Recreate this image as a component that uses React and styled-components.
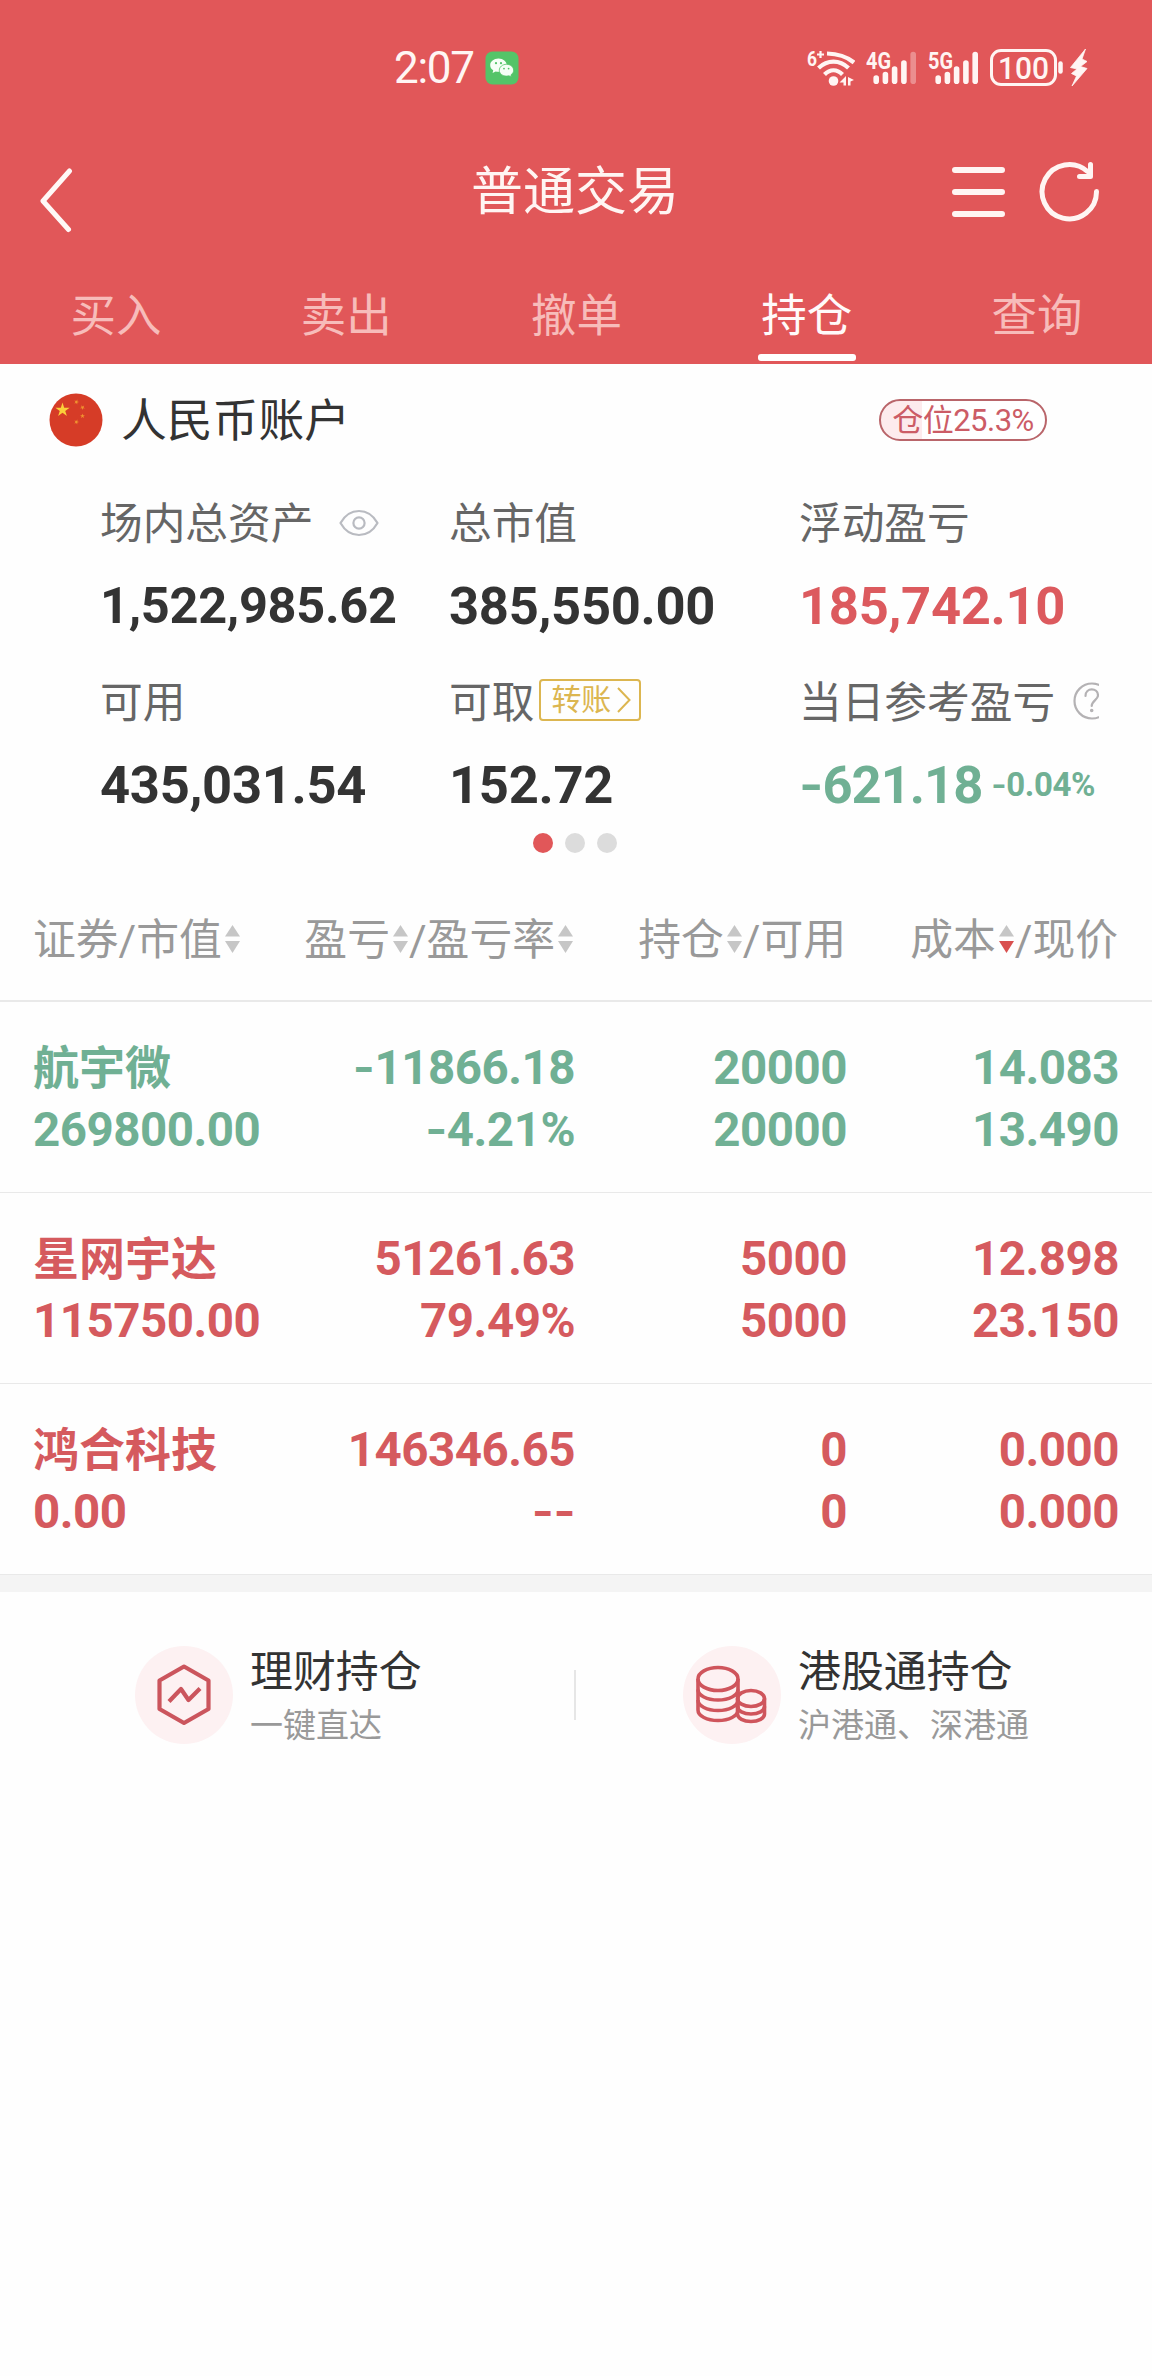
import React, { useState } from 'react'
import styled, { createGlobalStyle } from 'styled-components';

const tabs = ['买入', '卖出', '撤单', '持仓', '查询'];

const holdings = [
    { name: '航宇微', value: '269800.00', profit: '-11866.18', rate: '-4.21%', amount: '20000', usable: '20000', cost: '14.083', price: '13.490', color: '#70b094' },
    { name: '星网宇达', value: '115750.00', profit: '51261.63', rate: '79.49%', amount: '5000', usable: '5000', cost: '12.898', price: '23.150', color: '#d55a5e' },
    { name: '鸿合科技', value: '0.00', profit: '146346.65', rate: '--', amount: '0', usable: '0', cost: '0.000', price: '0.000', color: '#d55a5e' },
];

function WechatIcon() {
    return (
        <svg width="34" height="34" viewBox="0 0 34 34">
            <rect x="0.5" y="0.5" width="33" height="33" rx="7" fill="#54c468" />
            <path d="M13.5 7.5c-4.7 0-8.3 3-8.3 6.7 0 2.1 1.1 3.9 3 5.1l-.6 2.6 3-1.5c.9.3 1.9.4 2.9.4 4.6 0 8.2-2.9 8.2-6.6s-3.600-6.700-8.200-6.700z" fill="#f6fff6" />
            <path d="M21.500 13.300c-4 0-7.200 2.600-7.200 5.900s3.200 5.900 7.200 5.900c.9 0 1.700-.1 2.500-.3l2.500 1.300-.6-2.200c1.700-1.100 2.700-2.800 2.700-4.700 0-3.300-3.100-5.900-7.100-5.900z" fill="#f6fff6" stroke="#54c468" strokeWidth="0.8" />
            <circle cx="11" cy="12.200" r="1.100" fill="#54c468" />
            <circle cx="16" cy="12.200" r="1.100" fill="#54c468" />
            <circle cx="19" cy="17.600" r="0.900" fill="#54c468" />
            <circle cx="23.600" cy="17.600" r="0.900" fill="#54c468" />
        </svg>
    );
}

function WifiIcon() {
    return (
        <svg width="48" height="46" viewBox="0 -4 48 46" fill="none" stroke="#fff5f3">
            <text x="0" y="17" fontSize="21" fontWeight="700" fill="#fff5f3" stroke="none" textLength="10" lengthAdjust="spacingAndGlyphs">6</text>
            <path d="M10 5.500h7M13.500 2v7" strokeWidth="2.200" />
            <path d="M20 4.500c11 .2 20 3.300 27 9" strokeWidth="4.200" />
            <path d="M11.500 19c9-8.500 21-8.500 30 0" strokeWidth="4.200" />
            <path d="M17.500 25.500c5.500-5.500 12.500-5.500 18 0" strokeWidth="4.200" />
            <circle cx="26.500" cy="32" r="4.800" fill="#fff5f3" stroke="none" />
            <path d="M39 27v9.500h-2.500v-3h-4zM41 28l6 3-3.500 1.500v4h-2.500z" fill="#fff5f3" stroke="none" />
        </svg>
    );
}

function SignalIcon({ label, weak }) {
    return (
        <svg width="51" height="46" viewBox="0 -4 51 46" stroke="#fff5f3" strokeWidth="5.600" strokeLinecap="round">
            <text x="0" y="19.500" fontSize="23" fontWeight="700" fill="#fff5f3" stroke="none" textLength="25" lengthAdjust="spacingAndGlyphs">{label}</text>
            <path d="M10.200 29v3.300M19.400 25.500v6.800M28.600 20v12.300M37.900 14v18.300" />
            <path d="M47.200 5.500v26.800" opacity={weak ? 0.35 : 1} />
        </svg>
    );
}

function BatteryIcon() {
    return (
        <svg width="100" height="40" viewBox="0 0 100 40">
            <rect x="1.500" y="2.500" width="64" height="34" rx="9.500" fill="none" stroke="#fff5f3" strokeWidth="3" />
            <text x="8" y="30.500" fontSize="32" fontWeight="500" fill="#fff5f3" textLength="51" lengthAdjust="spacingAndGlyphs">100</text>
            <path d="M70.500 15.500v8" stroke="#fff5f3" strokeWidth="4.500" strokeLinecap="round" />
            <path d="M95.500 1L80.500 19.500 87 21l-5.500 4.500 5 2.500L82 38l15-17.500-6.500-2 6.500-5-5-2.500z" fill="#fff5f3" stroke="#fff5f3" strokeWidth="0.800" strokeLinejoin="round" />
        </svg>
    );
}

function BackIcon() {
    return (
        <svg width="36" height="66" viewBox="0 0 36 66" fill="none" stroke="#fff8f7" strokeWidth="5" strokeLinecap="round" strokeLinejoin="round">
            <path d="M32.500 3L6 33l25.500 28.500" />
        </svg>
    );
}

function MenuIcon() {
    return (
        <svg width="54" height="52" viewBox="0 0 54 52" stroke="#fff5f3" strokeWidth="6" strokeLinecap="round">
            <path d="M4 4h47M4 26h47M4 48h47" />
        </svg>
    );
}

function RefreshIcon() {
    return (
        <svg width="62" height="62" viewBox="0 0 62 62" fill="none" stroke="#fff5f3" strokeWidth="5" strokeLinecap="round" strokeLinejoin="round">
            <path d="M57.500 30.500A27.200 27.200 0 1 1 48.500 10.500" />
            <path d="M51.500 3.500v12h-11" />
        </svg>
    );
}

function FlagIcon() {
    const star = 'M0-1L.2245-.309.951-.309.3633.118.5878.809 0 .382-.5878.809-.3633.118-.951-.309-.2245-.309z';
    return (
        <svg width="54" height="54" viewBox="0 0 54 54">
            <circle cx="27" cy="27" r="26.500" fill="#d63c27" />
            <path d={star} fill="#fbcf3a" transform="translate(13.500 17) scale(7.500)" />
            <path d={star} fill="#f0932f" transform="translate(27.500 9) rotate(20) scale(2.600)" />
            <path d={star} fill="#f0932f" transform="translate(33.500 14.500) rotate(40) scale(2.600)" />
            <path d={star} fill="#f0932f" transform="translate(33.500 23) scale(2.600)" />
            <path d={star} fill="#f0932f" transform="translate(27.500 29) rotate(20) scale(2.600)" />
        </svg>
    );
}

function EyeIcon() {
    return (
        <svg width="40" height="28" viewBox="0 0 40 28" fill="none" stroke="#b9bbc1" strokeWidth="2.200">
            <path d="M1.500 14C6 6 12.500 2 20 2s14 4 18.500 12C34 22 27.500 26 20 26S6 22 1.500 14z" strokeLinejoin="round" />
            <circle cx="20" cy="14" r="5.600" />
        </svg>
    );
}

function QuestionIcon() {
    return (
        <svg width="38" height="38" viewBox="0 0 38 38" fill="none" stroke="#b4b2b4" strokeWidth="2.200" strokeLinecap="round">
            <circle cx="19" cy="19" r="17.500" />
            <path d="M12.500 14c0-9 12.500-8.500 12.500-.5 0 4-6.300 5.500-6.300 10.500" />
            <circle cx="18.700" cy="28.500" r="0.700" fill="#b4b2b4" />
        </svg>
    );
}

function SortIcon({ active }) {
    return (
        <SortSvg width="15" height="28" viewBox="0 0 15 28">
            <path d="M7.500 0L15 11.500H0z" fill="#c6c6c6" />
            <path d="M7.500 28L0 16h15z" fill={active ? '#d9504f' : '#c6c6c6'} />
        </SortSvg>
    );
}

function HexIcon() {
    return (
        <svg width="54" height="62" viewBox="0 0 54 62" fill="none" stroke="#cb555d" strokeWidth="4.200" strokeLinejoin="round">
            <path d="M27 2.500L51.500 16.500V45L27 59 2.500 45V16.500z" />
            <path d="M12 37.500L24 25l7.500 11L43 24.500" />
        </svg>
    );
}

function CoinsIcon() {
    return (
        <svg width="72" height="60" viewBox="0 0 72 60" fill="none" stroke="#cf555c" strokeWidth="3.600">
            <ellipse cx="22" cy="14" rx="20" ry="11.500" />
            <path d="M2 14v31c0 6 9 10.500 20 10.500s20-4.500 20-10.500v-31" />
            <path d="M2 24.500c0 6 9 10.500 20 10.500s20-4.500 20-10.500M2 35c0 6 9 10.500 20 10.500s20-4.500 20-10.500" />
            <ellipse cx="55" cy="33.500" rx="13.500" ry="8" />
            <path d="M41.500 33.500v15.500c0 4.200 6 7.500 13.500 7.500S68.500 53.200 68.500 49V33.500" />
            <path d="M41.500 41.500c0 4.200 6 7.500 13.500 7.500s13.500-3.300 13.500-7.500" />
        </svg>
    );
}

// minus signs are set in a wider face than the digits
function Num({ children }) {
    const digits = children.replace(/^-+/, '');
    const sign = children.slice(0, children.length - digits.length);
    return <span>{sign && <Sign>{sign}</Sign>}{digits}</span>;
}

function App() {
    const [activeTab, setActiveTab] = useState('持仓');

    return (
        <Page>
            <GlobalStyle />
            <Header>
                <StatusBar>
                    <Clock>2:07 <WechatIcon /></Clock>
                    <StatusIcons>
                        <WifiIcon />
                        <SignalIcon label="4G" weak />
                        <SignalIcon label="5G" />
                        <BatteryIcon />
                    </StatusIcons>
                </StatusBar>
                <NavBar>
                    <BackButton><BackIcon /></BackButton>
                    <Title>普通交易</Title>
                    <Actions>
                        <MenuIcon />
                        <RefreshIcon />
                    </Actions>
                </NavBar>
                <Tabs>
                    {tabs.map((tab) => (
                        <Tab key={tab} $active={activeTab === tab} onClick={() => setActiveTab(tab)}>{tab}</Tab>
                    ))}
                </Tabs>
            </Header>

            <AccountBar>
                <FlagIcon />
                <AccountName>人民币账户</AccountName>
                <Position>仓位25.3%</Position>
            </AccountBar>

            <Summary>
                <Cell>
                    <Label>场内总资产<EyeWrap><EyeIcon /></EyeWrap></Label>
                    <Value $small>1,522,985.62</Value>
                </Cell>
                <Cell>
                    <Label>总市值</Label>
                    <Value>385,550.00</Value>
                </Cell>
                <Cell>
                    <Label>浮动盈亏</Label>
                    <Value $color="#dc5a5e">185,742.10</Value>
                </Cell>
                <Cell>
                    <Label>可用</Label>
                    <Value>435,031.54</Value>
                </Cell>
                <Cell>
                    <Label>可取
                        <Transfer>转账
                            <svg width="14" height="26" viewBox="0 0 14 26" fill="none" stroke="#dcb650" strokeWidth="2">
                                <path d="M1 1l11.500 12L1 25" />
                            </svg>
                        </Transfer>
                    </Label>
                    <Value>152.72</Value>
                </Cell>
                <Cell>
                    <Label>当日参考盈亏<QuestionWrap><QuestionIcon /></QuestionWrap></Label>
                    <Value $color="#70b094" $tight><Num>-621.18</Num><Percent><Num>-0.04%</Num></Percent></Value>
                </Cell>
            </Summary>

            <Dots>
                <Dot $active />
                <Dot />
                <Dot />
            </Dots>

            <TableHead>
                <HeadCell>证券/市值<SortIcon /></HeadCell>
                <HeadCell $right>盈亏<SortIcon />/盈亏率<SortIcon /></HeadCell>
                <HeadCell $right>持仓<SortIcon />/可用</HeadCell>
                <HeadCell $right>成本<SortIcon active />/现价</HeadCell>
            </TableHead>

            {holdings.map((item) => (
                <Row key={item.name} $color={item.color}>
                    <RowCell><StockName>{item.name}</StockName><Num>{item.value}</Num></RowCell>
                    <RowCell $right><Num>{item.profit}</Num><Num>{item.rate}</Num></RowCell>
                    <RowCell $right><Num>{item.amount}</Num><Num>{item.usable}</Num></RowCell>
                    <RowCell $right><Num>{item.cost}</Num><Num>{item.price}</Num></RowCell>
                </Row>
            ))}
            <Band />

            <Links>
                <LinkItem $left={135}>
                    <Round><HexIcon /></Round>
                    <LinkText>
                        <h3>理财持仓</h3>
                        <p>一键直达</p>
                    </LinkText>
                </LinkItem>
                <Separator />
                <LinkItem $left={107}>
                    <Round><CoinsIcon /></Round>
                    <LinkText>
                        <h3>港股通持仓</h3>
                        <p>沪港通、深港通</p>
                    </LinkText>
                </LinkItem>
            </Links>
        </Page>
    )
}

const GlobalStyle = createGlobalStyle`
    *{
        box-sizing: border-box;
        margin: 0;
        padding: 0;
    }
    body{
        background: #fefefe;
        font-family: Roboto, "Noto Sans CJK SC", sans-serif;
    }
    svg{
        flex-shrink: 0;
    }
`;

const Page = styled.div`
    width: 1152px;
    min-height: 2376px;
    background: #fefefe;
`;

const Header = styled.header`
    height: 364px;
    background: #e15759;
    color: #fff5f3;
`;

const StatusBar = styled.div`
    display: flex;
    align-items: center;
    justify-content: space-between;
    height: 136px;
    padding: 0 62px 0 394px;
`;

const Clock = styled.div`
    display: flex;
    align-items: center;
    gap: 11px;
    font-size: 44px;
    letter-spacing: -1.300px;
    line-height: 60px;
`;

const StatusIcons = styled.div`
    display: flex;
    align-items: center;
    gap: 11px;
`;

const NavBar = styled.div`
    display: grid;
    grid-template-columns: 1fr auto 1fr;
    align-items: center;
    height: 108px;
    padding: 0 51px 0 37px;
`;

const BackButton = styled.div`
    display: flex;
    padding-top: 22px;
`;

const Title = styled.h1`
    padding: 6px 0 0 12px;
    font-size: 52px;
    font-weight: 400;
    line-height: 74px;
`;

const Actions = styled.div`
    display: flex;
    align-items: center;
    justify-content: flex-end;
    gap: 34px;
    padding-top: 3px;
`;

const Tabs = styled.div`
    display: flex;
    height: 120px;
    padding-left: 1px;
`;

const Tab = styled.div`
    display: flex;
    flex: 1;
    flex-direction: column;
    align-items: center;
    justify-content: flex-end;
    gap: 7px;
    padding-bottom: 3px;
    color: ${(props) => (props.$active ? '#fffafa' : '#f7bcba')};
    font-size: 45.500px;
    line-height: 60px;

    &::after{
        content: '';
        width: 98px;
        height: 7px;
        border-radius: 3px;
        background: ${(props) => (props.$active ? '#fff' : 'transparent')};
    }
`;

const AccountBar = styled.div`
    display: flex;
    align-items: center;
    height: 83px;
    padding: 29px 105px 0 49px;
`;

const AccountName = styled.h2`
    margin: 0 auto 0 18px;
    padding-top: 3px;
    color: #333;
    font-size: 45.800px;
    font-weight: 400;
    line-height: 54px;
`;

const Position = styled.div`
    width: 168px;
    height: 42px;
    border: 2px solid #b9656a;
    border-radius: 21px;
    background: linear-gradient(to right, #fdebed 25.3%, #fff 25.3%);
    color: #cc5c66;
    font-size: 31px;
    letter-spacing: -0.500px;
    line-height: 39px;
    text-align: center;
`;

const Summary = styled.div`
    display: grid;
    grid-template-columns: 349px 350px 300px;
    row-gap: 36px;
    padding: 47px 0 0 100px;
`;

const Cell = styled.div`
    overflow: hidden;
    height: 143px;
    white-space: nowrap;
`;

const Label = styled.div`
    display: flex;
    align-items: center;
    color: #666;
    font-size: 42.700px;
    line-height: 60px;
`;

const EyeWrap = styled.span`
    display: flex;
    margin-left: 26px;
    padding-bottom: 3px;
`;

const QuestionWrap = styled.span`
    display: flex;
    margin-left: 18px;
    padding-bottom: 5px;
`;

const Transfer = styled.span`
    display: flex;
    align-items: center;
    gap: 6px;
    width: 102px;
    height: 42px;
    margin: 0 0 6px 5px;
    padding-left: 10px;
    border: 2px solid #dcb650;
    border-radius: 4px;
    color: #dcb650;
    font-size: 30px;
    line-height: 38px;
`;

const Value = styled.div`
    margin-top: 21px;
    color: ${(props) => props.$color || '#333'};
    font-size: ${(props) => (props.$small ? '50.500px' : '52.500px')};
    font-weight: 700;
    letter-spacing: ${(props) => (props.$tight ? '-1px' : '-0.300px')};
    line-height: 62px;
`;

const Sign = styled.span`
    font-family: Inter, Roboto, sans-serif;
    font-weight: 600;
    line-height: 1;
`;

const Percent = styled.span`
    margin-left: 9px;
    font-size: 33px;
    letter-spacing: -0.400px;
    line-height: 1;
    vertical-align: 7px;
`;

const Dots = styled.div`
    display: flex;
    justify-content: center;
    gap: 12px;
    padding: 17px 3px 0 0;
`;

const Dot = styled.span`
    width: 20px;
    height: 20px;
    border-radius: 50%;
    background: ${(props) => (props.$active ? '#e15759' : '#dcdcdc')};
`;

const TableHead = styled.div`
    display: grid;
    grid-template-columns: 228px 313px 272px 272px;
    height: 149px;
    padding: 57px 33px 0;
    border-bottom: 2px solid #e9e9e9;
`;

const HeadCell = styled.div`
    display: flex;
    align-items: center;
    justify-content: ${(props) => (props.$right ? 'flex-end' : 'flex-start')};
    height: 60px;
    color: #999;
    font-size: 42.800px;
    line-height: 60px;
    white-space: nowrap;
`;

const SortSvg = styled.svg`
    margin: 0 1px 2px 3px;
`;

const Row = styled.div`
    display: grid;
    grid-template-columns: 228px 314px 272px 272px;
    height: 191px;
    padding: 35px 32px 0 33px;
    border-bottom: 1px solid #e9e9e9;
    color: ${(props) => props.$color};
    font-size: 47.500px;
    font-weight: 700;
    letter-spacing: -0.500px;
    line-height: 62px;
`;

const RowCell = styled.div`
    display: flex;
    flex-direction: column;
    text-align: ${(props) => (props.$right ? 'right' : 'left')};
`;

const StockName = styled.span`
    font-size: 46px;
    letter-spacing: 0;
`;

const Band = styled.div`
    height: 17px;
    background: #f4f4f4;
`;

const Links = styled.div`
    display: flex;
    align-items: center;
    height: 206px;
`;

const LinkItem = styled.div`
    display: flex;
    align-items: center;
    gap: 17px;
    width: 574px;
    padding-left: ${(props) => props.$left}px;
`;

const Separator = styled.div`
    width: 2px;
    height: 50px;
    background: #e6e6e6;
`;

const Round = styled.div`
    display: flex;
    align-items: center;
    justify-content: center;
    width: 98px;
    height: 98px;
    border-radius: 50%;
    background: #fdf1f2;
`;

const LinkText = styled.div`
    padding-top: 6px;

    h3{
        color: #333;
        font-size: 42.900px;
        font-weight: 400;
        line-height: 55px;
    }
    p{
        color: #999;
        font-size: 33px;
        line-height: 51px;
    }
`;

export default App;
